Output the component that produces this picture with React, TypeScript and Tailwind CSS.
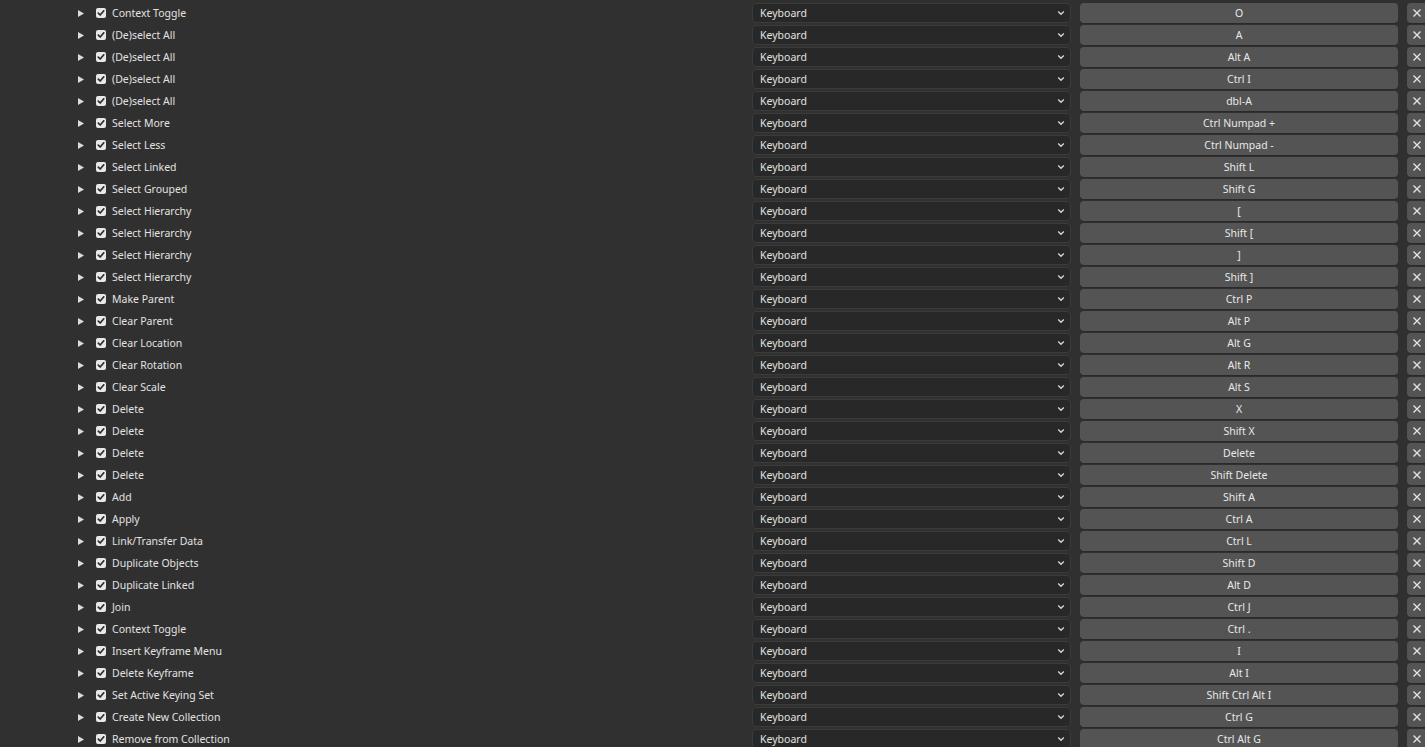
import React from "react";

const rows: [string, string][] = [
  ["Context Toggle", "O"],
  ["(De)select All", "A"],
  ["(De)select All", "Alt A"],
  ["(De)select All", "Ctrl I"],
  ["(De)select All", "dbl-A"],
  ["Select More", "Ctrl Numpad +"],
  ["Select Less", "Ctrl Numpad -"],
  ["Select Linked", "Shift L"],
  ["Select Grouped", "Shift G"],
  ["Select Hierarchy", "["],
  ["Select Hierarchy", "Shift ["],
  ["Select Hierarchy", "]"],
  ["Select Hierarchy", "Shift ]"],
  ["Make Parent", "Ctrl P"],
  ["Clear Parent", "Alt P"],
  ["Clear Location", "Alt G"],
  ["Clear Rotation", "Alt R"],
  ["Clear Scale", "Alt S"],
  ["Delete", "X"],
  ["Delete", "Shift X"],
  ["Delete", "Delete"],
  ["Delete", "Shift Delete"],
  ["Add", "Shift A"],
  ["Apply", "Ctrl A"],
  ["Link/Transfer Data", "Ctrl L"],
  ["Duplicate Objects", "Shift D"],
  ["Duplicate Linked", "Alt D"],
  ["Join", "Ctrl J"],
  ["Context Toggle", "Ctrl ."],
  ["Insert Keyframe Menu", "I"],
  ["Delete Keyframe", "Alt I"],
  ["Set Active Keying Set", "Shift Ctrl Alt I"],
  ["Create New Collection", "Ctrl G"],
  ["Remove from Collection", "Ctrl Alt G"],
];

function Row({ label, keyName }: { label: string; keyName: string }) {
  return (
    <div className="flex items-center h-[20px] shrink-0">
      <div className="w-[752px] shrink-0 flex items-center h-full">
        <svg width="6" height="7" viewBox="0 0 6 7" className="ml-[78px] shrink-0">
          <polygon points="0,0 6,3.5 0,7" fill="#dcdcdc" />
        </svg>
        <div className="ml-[12px] w-[10px] h-[10px] rounded-[2px] bg-[#e8e8e8] flex items-center justify-center shrink-0">
          <svg width="8" height="8" viewBox="0 0 8 8">
            <polyline points="1.3,4.2 3.2,6 6.8,1.8" fill="none" stroke="#2b2b2b" strokeWidth="1.7" strokeLinecap="round" strokeLinejoin="round" />
          </svg>
        </div>
        <span className="ml-[6px] text-[10.5px] leading-[20px] text-[#e2e2e2] whitespace-nowrap">{label}</span>
      </div>
      <div className="w-[319px] shrink-0 h-full rounded-[4px] bg-[#282828] border border-[#3b3b3b] flex items-center justify-between pl-[7px] pr-[5px]">
        <span className="text-[10.5px] leading-[18px] text-[#e2e2e2]">Keyboard</span>
        <svg width="8" height="6" viewBox="0 0 8 6">
          <polyline points="1.2,1.5 4,4.3 6.8,1.5" fill="none" stroke="#d8d8d8" strokeWidth="1.3" />
        </svg>
      </div>
      <div className="ml-[9px] w-[318px] shrink-0 h-full rounded-[4px] bg-[#545454] shadow-[0_1px_0_#2a2a2a] flex items-center justify-center">
        <span className="text-[10.5px] leading-[20px] text-[#e8e8e8] whitespace-nowrap">{keyName}</span>
      </div>
      <div className="ml-[9px] w-[20px] shrink-0 h-full rounded-[4px] bg-[#545454] shadow-[0_1px_0_#2a2a2a] flex items-center justify-center">
        <svg width="10" height="10" viewBox="0 0 10 10">
          <path d="M1.5 1.5 L8.5 8.5 M8.5 1.5 L1.5 8.5" stroke="#e6e6e6" strokeWidth="1.3" />
        </svg>
      </div>
    </div>
  );
}

export default function App() {
  return (
    <div
      className="w-[1425px] h-[747px] overflow-hidden bg-[#303030] flex flex-col gap-[2px] pt-[3px]"
      style={{ fontFamily: "'Noto Sans', Inter, sans-serif" }}
    >
      {rows.map(([l, k], i) => (
        <Row key={i} label={l} keyName={k} />
      ))}
    </div>
  );
}
